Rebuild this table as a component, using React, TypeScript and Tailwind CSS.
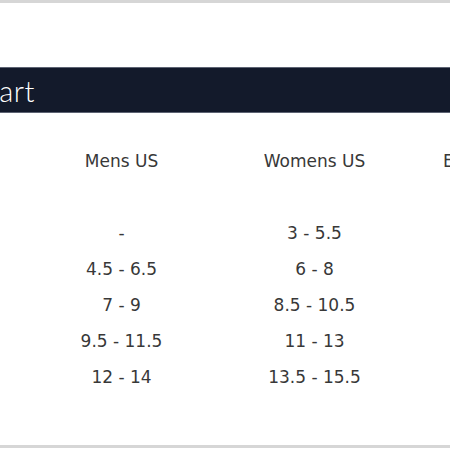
import React from 'react';

const rows: string[][] = [
  ['', ''],
  ['-', '3 - 5.5'],
  ['4.5 - 6.5', '6 - 8'],
  ['7 - 9', '8.5 - 10.5'],
  ['9.5 - 11.5', '11 - 13'],
  ['12 - 14', '13.5 - 15.5'],
];

const App: React.FC = () => {
  return (
    <div className="w-[450px] h-[450px] overflow-hidden bg-white flex flex-col">
      <div className="h-[3px] bg-[#d6d6d6]" />
      <div className="h-[64px]" />
      {/* title bar */}
      <div className="h-[46px] bg-[#131a2b] border-y border-[#5d6373] flex items-center overflow-hidden">
        <div className="w-[35px] shrink-0 flex justify-end">
          <span
            className="whitespace-nowrap text-white text-[29px] font-light leading-none tracking-[0.5px]"
            style={{ fontFamily: 'Lato, "Open Sans", sans-serif' }}
          >
            Size Chart
          </span>
        </div>
      </div>
      <div
        className="flex-1 text-[#383838] text-[17px] pl-[25px]"
        style={{ fontFamily: '"DejaVu Sans", sans-serif' }}
      >
        <div className="grid grid-cols-[193px_193px_193px] h-[36px] items-center mt-[31px]">
          <div className="text-center">Mens US</div>
          <div className="text-center">Womens US</div>
          <div className="pl-[32px] whitespace-nowrap">EU Size</div>
        </div>
        {rows.map((r, i) => (
          <div key={i} className="grid grid-cols-[193px_193px_193px] h-[36px] items-center">
            <div className="text-center">{r[0]}</div>
            <div className="text-center">{r[1]}</div>
            <div />
          </div>
        ))}
      </div>
      <div className="h-[3px] bg-[#d6d6d6] mb-[2px]" />
    </div>
  );
};

export default App;
